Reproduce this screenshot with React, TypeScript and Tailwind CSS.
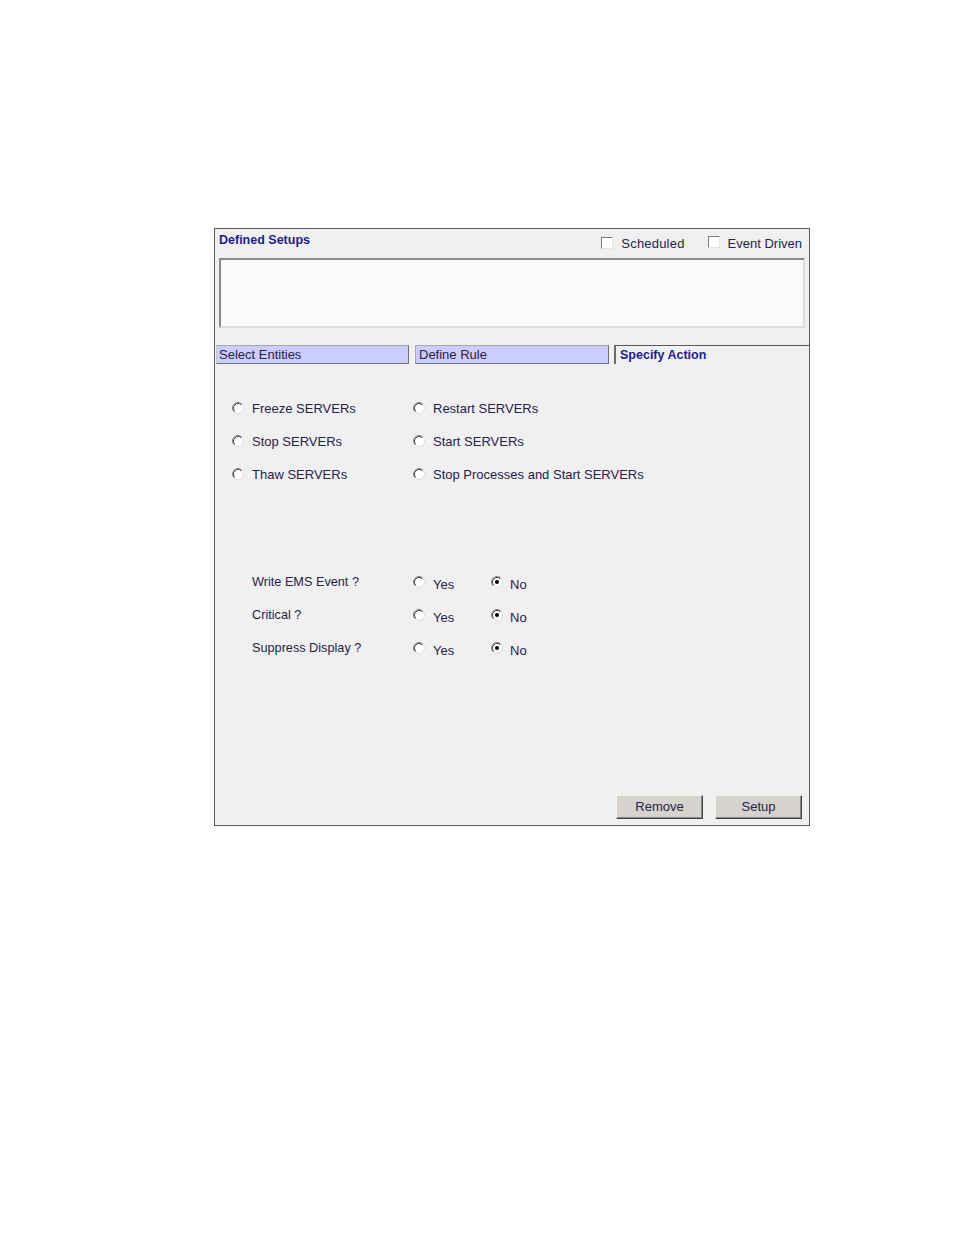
import React from "react";

const font = { fontFamily: '"Liberation Sans", Arial, sans-serif' };

function Radio({ checked = false }: { checked?: boolean }) {
  return (
    <svg width="12" height="12" viewBox="0 0 12 12" className="shrink-0">
      <circle cx="6" cy="6" r="5.5" fill="#ffffff" stroke="#dcdcdc" />
      <path d="M2.11 9.89 A5.5 5.5 0 0 1 9.89 2.11" fill="none" stroke="#8a8a8a" />
      <path d="M2.82 9.18 A4.5 4.5 0 0 1 9.18 2.82" fill="none" stroke="#404040" />
      {checked && <circle cx="6" cy="6" r="2" fill="#000000" />}
    </svg>
  );
}

function Check() {
  return (
    <span className="inline-block w-[12px] h-[12px] border-[1.5px] border-t-[#7a7a7a] border-l-[#7a7a7a] border-b-[#e4e4e4] border-r-[#e4e4e4] bg-white shrink-0" />
  );
}

function RadioItem({ label, checked = false }: { label: string; checked?: boolean }) {
  return (
    <div className="flex items-center gap-[8px] h-[33px]">
      <Radio checked={checked} />
      <span className="text-[13px] leading-[16px] text-[#26234a] pt-[2px]">{label}</span>
    </div>
  );
}

function OptionRow({ label }: { label: string }) {
  return (
    <div className="flex items-center h-[33px]">
      <span className="w-[161px] text-[12.7px] leading-[16px] text-[#26234a] pb-[1px]">{label}</span>
      <div className="w-[78px] flex items-center gap-[8px]">
        <span className="pb-[1px] flex"><Radio /></span>
        <span className="text-[13px] leading-[16px] text-[#26234a] pt-[4px]">Yes</span>
      </div>
      <div className="flex items-center gap-[7px]">
        <span className="pb-[1px] flex"><Radio checked /></span>
        <span className="text-[13px] leading-[16px] text-[#26234a] pt-[4px]">No</span>
      </div>
    </div>
  );
}

function Button({ label }: { label: string }) {
  return (
    <div className="w-[87px] h-[24px] flex items-center justify-center bg-[#d6d3ce] border border-t-[#f4f4f4] border-l-[#f4f4f4] border-b-[#404040] border-r-[#404040] shadow-[inset_-1px_-1px_0_#8a8a8a] text-[13px] text-[#26234a]">
      {label}
    </div>
  );
}

export default function App() {
  return (
    <div className="w-[954px] h-[1235px] bg-white pt-[228px] pl-[214px]" style={font}>
      <div className="w-[596px] h-[598px] border border-[#5a5a5a] bg-[#f0f0f0] flex flex-col">
        {/* header */}
        <div className="h-[29px] flex justify-between items-start pl-[4px] pr-[7px]">
          <span className="pt-[3px] text-[12.5px] leading-[16px] font-bold text-[#1e1e8c]">Defined Setups</span>
          <div className="flex items-center pt-[2px]">
            <Check />
            <span className="ml-[8px] text-[13px] leading-[16px] text-[#26234a] pt-[2px] tracking-[0.2px]">Scheduled</span>
            <span className="ml-[23px]"><Check /></span>
            <span className="ml-[8px] text-[13px] leading-[16px] text-[#26234a] pt-[2px]">Event Driven</span>
          </div>
        </div>
        {/* list box */}
        <div className="mx-[4px] h-[70px] bg-[#fafafa] border-2 border-t-[#8a8a8a] border-l-[#8a8a8a] border-b-[#dcdcdc] border-r-[#dcdcdc]" />
        {/* tabs */}
        <div className="mt-[17px] h-[19px] flex">
          <div className="ml-[1px] w-[193px] bg-[#ccccff] border border-t-[#a8a8a8] border-l-[#c8c8c8] border-b-[#707070] border-r-[#707070] flex items-center pl-[2px] text-[13px] text-[#26234a]">
            Select Entities
          </div>
          <div className="ml-[6px] w-[194px] bg-[#ccccff] border border-t-[#a8a8a8] border-l-[#a8a8a8] border-b-[#707070] border-r-[#707070] flex items-center pl-[3px] text-[13px] text-[#26234a]">
            Define Rule
          </div>
          <div className="ml-[5px] flex-1 border-t border-l-2 border-t-[#5a5a5a] border-l-[#6a6a6a] flex items-center pl-[4px] text-[12.5px] font-bold text-[#1e1e8c]">
            Specify Action
          </div>
        </div>
        {/* actions */}
        <div className="mt-[27px] pl-[17px] flex">
          <div className="w-[181px] flex flex-col">
            <RadioItem label="Freeze SERVERs" />
            <RadioItem label="Stop SERVERs" />
            <RadioItem label="Thaw SERVERs" />
          </div>
          <div className="flex flex-col">
            <RadioItem label="Restart SERVERs" />
            <RadioItem label="Start SERVERs" />
            <RadioItem label="Stop Processes and Start SERVERs" />
          </div>
        </div>
        {/* options */}
        <div className="mt-[76px] pl-[37px] flex flex-col">
          <OptionRow label="Write EMS Event ?" />
          <OptionRow label="Critical ?" />
          <OptionRow label="Suppress Display ?" />
        </div>
        {/* buttons */}
        <div className="mt-auto pb-[6px] pr-[7px] flex justify-end gap-[12px]">
          <Button label="Remove" />
          <Button label="Setup" />
        </div>
      </div>
    </div>
  );
}
